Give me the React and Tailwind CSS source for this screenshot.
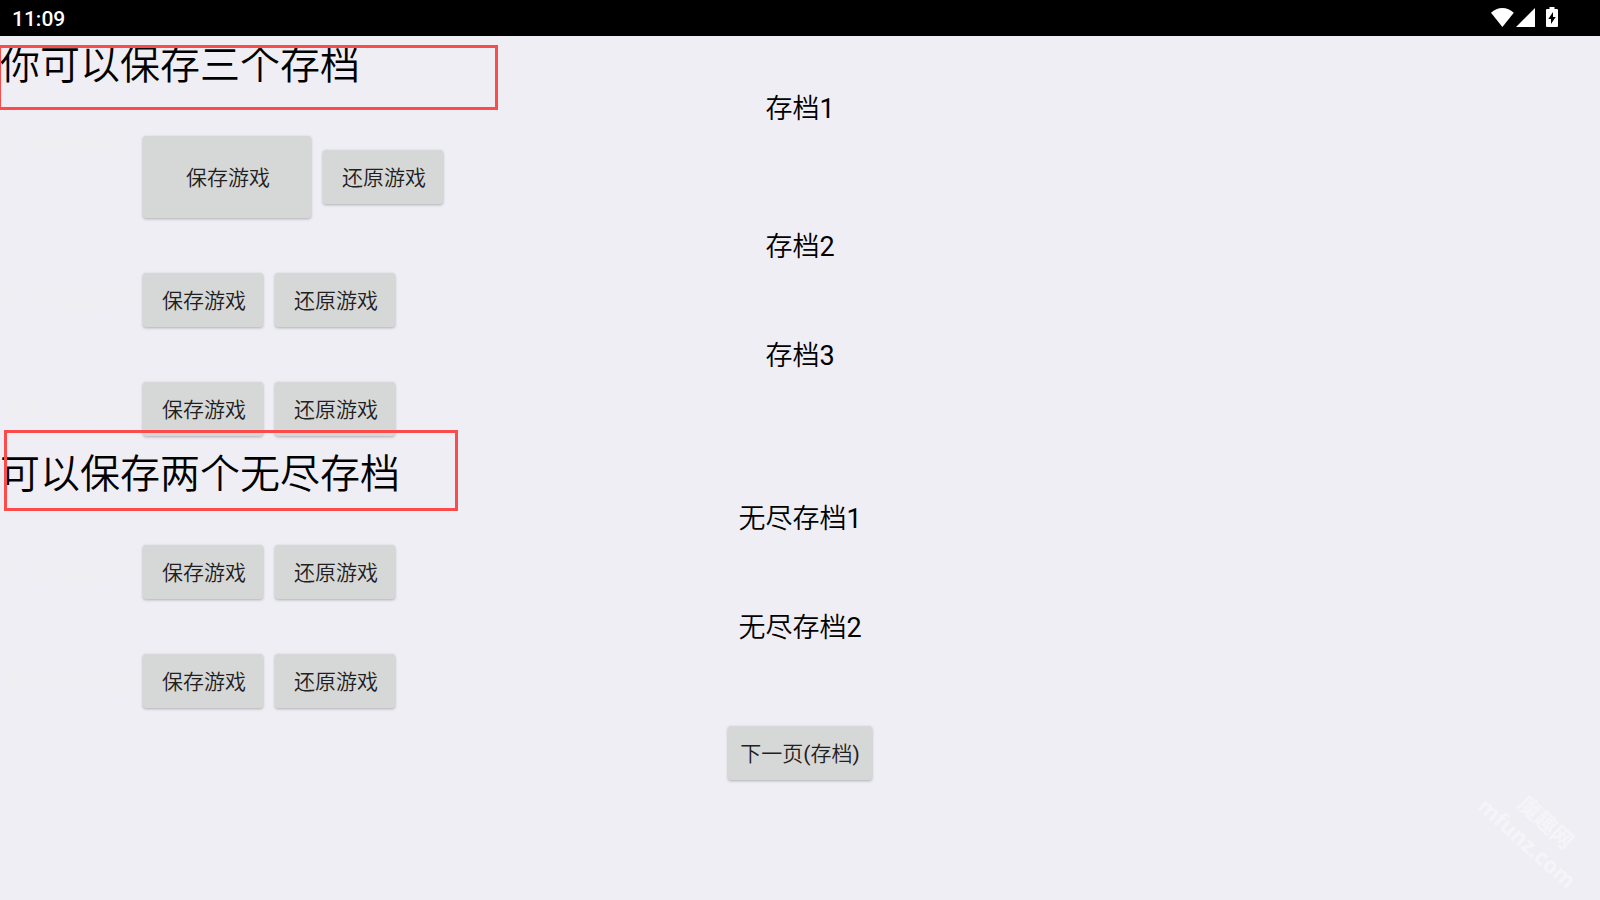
import React from "react";

const BUTTON =
  "shrink-0 rounded-[3px] bg-[#d6d8d7] pt-0.5 text-[21px] leading-[30px] text-[#1f2020] shadow-[0_1px_3px_rgba(0,0,0,0.28)]";

function StatusBar() {
  return (
    <header className="flex h-9 items-center justify-between bg-black pl-3 pr-9 text-white">
      <time className="pt-px text-[21px] font-medium leading-6">11:09</time>
      <div className="flex items-center">
        <svg className="h-6 w-6" viewBox="0 0 24 24" fill="currentColor" aria-label="Wi-Fi">
          <path d="M12.400 20.900 1 6.700Q6 2 12.400 2t11.400 4.700Z" />
        </svg>
        <svg className="h-6 w-6" viewBox="0 0 24 24" fill="currentColor" aria-label="Signal">
          <path d="M2 20.900h19V2Z" />
        </svg>
        <svg className="ml-0.5 h-6 w-6" viewBox="0 0 24 24" fill="currentColor" aria-label="Battery charging">
          <path
            fillRule="evenodd"
            d="M9.500 1h5v2h2.500q1 0 1 1v16q0 1-1 1H7q-1 0-1-1V4q0-1 1-1h2.500ZM13 6 8.300 13h2.700V18l4.700-7H13Z"
          />
        </svg>
      </div>
    </header>
  );
}

function SlotLabel({ children }) {
  return <h2 className="h-9 text-center text-[27px] leading-[39px]">{children}</h2>;
}

function SlotRow({ note }) {
  return (
    <div className="flex h-[73px] items-start pt-[9px]">
      <p className="w-[143px] shrink-0 whitespace-nowrap pl-px text-[21px] leading-[56px] text-[#f0f0f2]">{note}</p>
      <div className="flex gap-3">
        <button type="button" className={`${BUTTON} h-[54px] w-[120px] pl-0.5 font-[350]`}>保存游戏</button>
        <button type="button" className={`${BUTTON} h-[54px] w-[120px] pl-0.5 font-[350]`}>还原游戏</button>
      </div>
    </div>
  );
}

export default function App() {
  return (
    <div className="relative min-h-screen overflow-hidden bg-[#efeef4] font-['Roboto','Noto_Sans_CJK_SC_DemiLight','Noto_Sans_CJK_SC',sans-serif] text-black">
      <StatusBar />
      <main>
        <div className="relative h-[54px]">
          <h1 className="text-[40px] font-[350] leading-[59px]">你可以保存三个存档</h1>
          <span className="absolute -left-0.5 top-[9px] h-[65px] w-[500px] border-3 border-[#fb4b4b]" />
        </div>

        <SlotLabel>存档1</SlotLabel>
        <div className="flex h-[102px] items-start pt-[10px]">
          <p className="-mt-2 w-[143px] shrink-0 whitespace-nowrap pl-px text-[21px] leading-8 text-[#f0f0f2]">文本9很快就会</p>
          <div className="flex items-center gap-3">
            <button type="button" className={`${BUTTON} h-[82px] w-[168px] pl-0.5 font-[350]`}>保存游戏</button>
            <button type="button" className={`${BUTTON} h-[54px] w-[120px] pl-0.5 font-[350]`}>还原游戏</button>
          </div>
        </div>

        <SlotLabel>存档2</SlotLabel>
        <SlotRow note="文本1很快就会" />
        <SlotLabel>存档3</SlotLabel>
        <SlotRow note="文本1很快就会" />

        <div className="relative h-[54px]">
          <h1 className="text-[40px] font-[350] leading-[58px]">可以保存两个无尽存档</h1>
          <span className="absolute -top-4 left-1 h-[81px] w-[454px] border-3 border-[#fb4b4b]" />
        </div>

        <SlotLabel>无尽存档1</SlotLabel>
        <SlotRow note="文本2很快就会" />
        <SlotLabel>无尽存档2</SlotLabel>
        <SlotRow note="文本2很快就会" />

        <div className="flex justify-center pt-2">
          <button type="button" className={`${BUTTON} h-[54px] px-3`}>下一页(存档)</button>
        </div>
      </main>

      <div className="pointer-events-none absolute bottom-10 right-0.5 rotate-[42deg] text-center font-['Noto_Sans','Noto_Sans_CJK_SC',sans-serif] font-bold text-[#f5f5f9]">
        <p className="text-[22px] leading-7">魔趣网</p>
        <p className="text-[22px] leading-7">mfunz.com</p>
      </div>
    </div>
  );
}
